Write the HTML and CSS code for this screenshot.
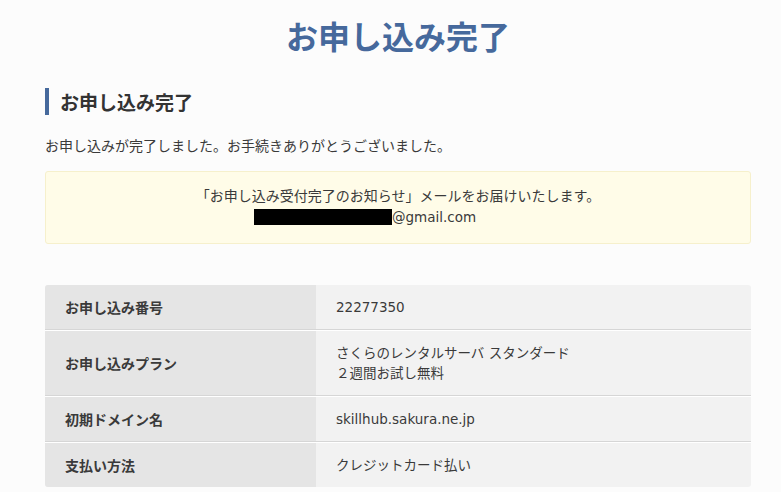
FILE: index.html
```html
<!DOCTYPE html>
<html lang="ja">
<head>
<meta charset="utf-8">
<title>お申し込み完了</title>
<link rel="stylesheet" href="styles.css">
</head>
<body>
<div class="page">
  <h1 class="page-title">お申し込み完了</h1>
  <h2 class="section-title">お申し込み完了</h2>
  <p class="lead">お申し込みが完了しました。お手続きありがとうございました。</p>
  <div class="notice">
    <p class="notice-line">「お申し込み受付完了のお知らせ」メールをお届けいたします。</p>
    <p class="notice-line notice-mail"><span class="redacted"></span>@gmail.com</p>
  </div>
  <div class="info">
    <div class="row">
      <div class="label">お申し込み番号</div>
      <div class="value">22277350</div>
    </div>
    <div class="row">
      <div class="label">お申し込みプラン</div>
      <div class="value">さくらのレンタルサーバ スタンダード<br>２週間お試し無料</div>
    </div>
    <div class="row">
      <div class="label">初期ドメイン名</div>
      <div class="value">skillhub.sakura.ne.jp</div>
    </div>
    <div class="row">
      <div class="label">支払い方法</div>
      <div class="value">クレジットカード払い</div>
    </div>
  </div>
</div>
</body>
</html>
```

FILE: styles.css
```css
html, body {
  margin: 0;
  padding: 0;
  background: #fcfcfc;
}
body {
  font-family: "DejaVu Sans", "Noto Sans CJK JP", sans-serif;
  color: #3a3a3a;
  font-size: 14px;
}
.page {
  width: 706px;
  margin: 0 0 0 45px;
  padding-top: 14px;
}
.page-title {
  margin: 0;
  text-align: center;
  font-family: "Noto Sans CJK JP", sans-serif;
  font-size: 32px;
  line-height: 42px;
  font-weight: bold;
  color: #46699c;
}
.section-title {
  margin: 32px 0 0;
  border-left: 4px solid #46699c;
  padding-left: 11px;
  font-family: "Noto Sans CJK JP", sans-serif;
  font-size: 19px;
  line-height: 27px;
  font-weight: bold;
  color: #333;
}
.lead {
  margin: 20px 0 0;
  line-height: 20px;
  font-family: "Noto Sans CJK JP", sans-serif;
}
.notice {
  margin-top: 16px;
  background: #fffce8;
  border: 1px solid #f6f0cc;
  border-radius: 3px;
  padding: 12px 0 15px;
  text-align: center;
}
.notice-line {
  margin: 0;
  line-height: 22px;
  font-family: "Noto Sans CJK JP", sans-serif;
}
.notice-mail {
  padding-right: 66px;
  font-family: "DejaVu Sans", sans-serif;
  font-size: 13.5px;
}
.redacted {
  display: inline-block;
  width: 138px;
  height: 16px;
  background: #000;
  vertical-align: -3px;
}
.info {
  margin-top: 41px;
  border-radius: 3px;
  overflow: hidden;
  background: #f2f2f2;
}
.row {
  display: grid;
  grid-template-columns: 271px 1fr;
  border-top: 1px solid #fff;
  border-bottom: 1px solid #d6d6d6;
}
.row:first-child {
  border-top: 0;
}
.row:last-child {
  border-bottom: 0;
}
.label {
  background: #e5e5e5;
  padding: 12px 20px;
  line-height: 20px;
  font-weight: bold;
  font-family: "Noto Sans CJK JP", sans-serif;
  display: flex;
  align-items: center;
}
.value {
  padding: 12px 20px;
  line-height: 20px;
  font-size: 13.5px;
}
```
